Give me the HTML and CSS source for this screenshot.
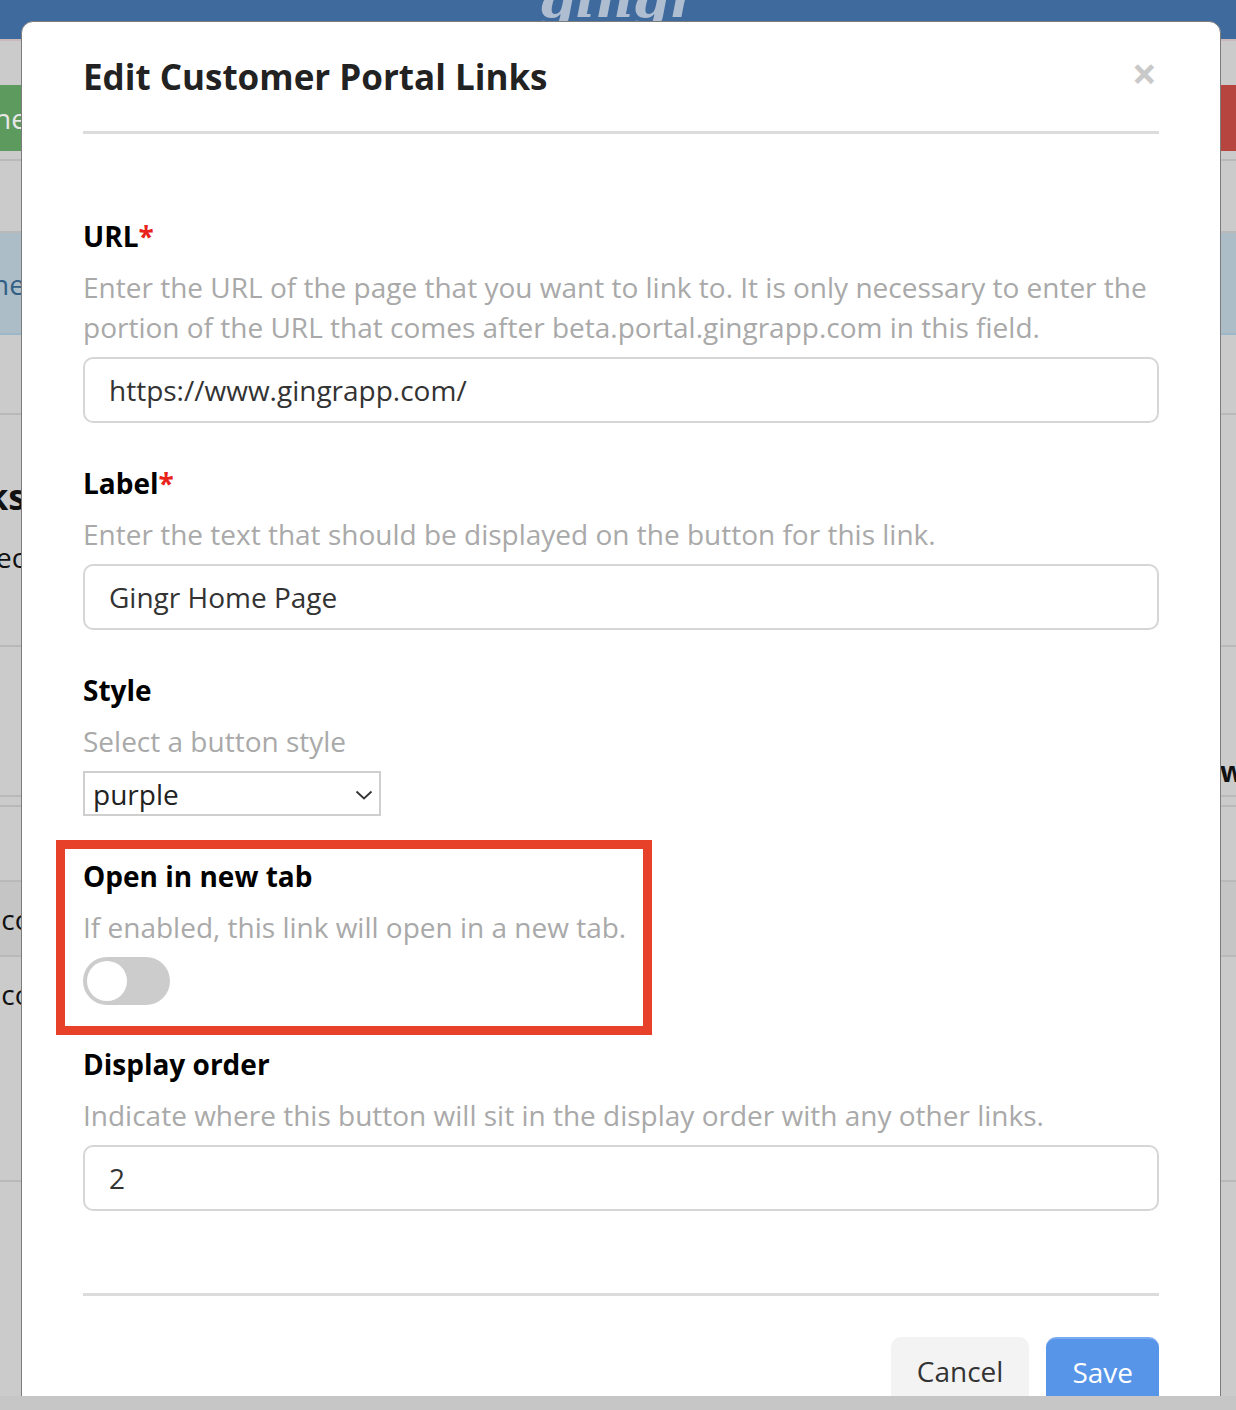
FILE: index.html
```html
<!DOCTYPE html>
<html lang="en">
<head>
    <meta charset="UTF-8">
    <meta name="viewport" content="width=device-width, initial-scale=1.0">
    <title>Edit Customer Portal Links</title>
    <link rel="stylesheet" href="styles.css">
</head>
<body>
    <div class="stage">
        <!-- page behind the dialog (dimmed) -->
        <div class="page">
            <div class="topbar"><span class="logo">gingr</span></div>
            <div class="toolbar">
                <span class="btn-bg green">ne</span>
                <span class="btn-bg red">gi</span>
            </div>
            <div class="row thin"></div>
            <div class="row info"><span>ne</span></div>
            <div class="row tall"></div>
            <div class="row heading"><b>ks</b><span>ec</span></div>
            <div class="row gap"><span></span><b class="right">w</b></div>
            <div class="row sliver"></div>
            <div class="row empty"></div>
            <div class="row line dark"><span>.co</span></div>
            <div class="row line last"><span>.co</span></div>
        </div>

        <!-- dialog -->
        <div class="modal">
            <div class="modal-head">
                <h1>Edit Customer Portal Links</h1>
                <span class="close">&times;</span>
            </div>
            <form class="modal-body">
                <div class="group">
                    <label>URL<span class="req">*</span></label>
                    <p class="help">Enter the URL of the page that you want to link to. It is only necessary to enter the portion of the URL that comes after beta.portal.gingrapp.com in this field.</p>
                    <input class="field" type="text" value="https://www.gingrapp.com/">
                </div>
                <div class="group">
                    <label>Label<span class="req">*</span></label>
                    <p class="help">Enter the text that should be displayed on the button for this link.</p>
                    <input class="field" type="text" value="Gingr Home Page">
                </div>
                <div class="group">
                    <label>Style</label>
                    <p class="help">Select a button style</p>
                    <div class="select">
                        <span>purple</span>
                        <svg width="18" height="12" viewBox="0 0 18 12"><path d="M1.5 2.5 L9 9.5 L16.5 2.5" fill="none" stroke="#333" stroke-width="1.8"/></svg>
                    </div>
                </div>
                <div class="group marked">
                    <label>Open in new tab</label>
                    <p class="help">If enabled, this link will open in a new tab.</p>
                    <span class="toggle"><span class="knob"></span></span>
                </div>
                <div class="group">
                    <label>Display order</label>
                    <p class="help">Indicate where this button will sit in the display order with any other links.</p>
                    <input class="field" type="text" value="2">
                </div>
            </form>
            <div class="modal-foot">
                <button class="btn cancel" type="button">Cancel</button>
                <button class="btn save" type="button">Save</button>
            </div>
        </div>
    </div>
    <div class="bottom-strip"></div>
</body>
</html>
```

FILE: styles.css
```css
*{
    margin: 0;
    padding: 0;
    box-sizing: border-box;
}
body{
    font-family: "Open Sans", "Noto Sans", sans-serif;
    background-color: #c6c6c6;
    width: 1236px;
    overflow: hidden;
}
.stage{
    position: relative;
    height: 1396px;
    overflow: hidden;
}

/* dimmed page behind */
.page{
    background-color: #cbcbcb;
    height: 1396px;
    color: #111;
}
.topbar{
    height: 41px;
    background-color: #3e6a9e;
    border-bottom: 2px solid #c9b9bb;
    text-align: center;
    overflow: hidden;
}
.logo{
    display: inline-block;
    font-family: "DejaVu Serif", serif;
    font-style: italic;
    font-weight: bold;
    font-size: 52px;
    line-height: 1;
    color: #aebdd0;
    margin-top: -30px;
}
.toolbar{
    display: flex;
    justify-content: space-between;
    padding-top: 44px;
    height: 120px;
    border-bottom: 2px solid #b9b9b9;
}
.btn-bg{
    display: block;
    width: 60px;
    height: 66px;
    color: #e8e8e8;
    font-size: 28px;
    line-height: 66px;
}
.green{
    background-color: #5d9a5d;
    margin-left: -6px;
}
.red{
    background-color: #b5453e;
    padding-left: 8px;
}
.row{
    border-bottom: 2px solid #b9b9b9;
}
.thin{
    height: 72px;
}
.info{
    height: 102px;
    background-color: #adbdc7;
    border-bottom-color: #9cb7c8;
    color: #345f85;
    font-size: 28px;
    line-height: 102px;
}
.info span{
    margin-left: -8px;
}
.tall{
    height: 80px;
}
.heading{
    height: 230px;
    padding-top: 62px;
    border-bottom: none;
}
.heading b{
    display: block;
    font-size: 36px;
    line-height: 40px;
    margin-left: -14px;
}
.heading span{
    display: block;
    font-size: 28px;
    line-height: 40px;
    margin-left: -4px;
    margin-top: 20px;
}
.gap{
    height: 152px;
    border-top: 2px solid #b9b9b9;
    display: flex;
    justify-content: space-between;
    align-items: flex-end;
}
.right{
    font-size: 28px;
    line-height: 36px;
    margin-right: -8px;
    margin-bottom: 6px;
}
.sliver{
    height: 10px;
}
.empty{
    height: 75px;
}
.line{
    height: 75px;
    font-size: 28px;
    line-height: 75px;
}
.line span{
    margin-left: -6px;
}
.dark{
    background-color: #c5c5c5;
}
.last{
    height: 225px;
}

/* dialog */
.modal{
    position: absolute;
    top: 21px;
    left: 21px;
    width: 1200px;
    background-color: #fff;
    border: 1px solid #7c7c7c;
    border-radius: 12px;
    padding: 0 61px;
}
.modal-head{
    display: flex;
    justify-content: space-between;
    align-items: flex-start;
    padding: 31px 0 30px;
    border-bottom: 3px solid #dcdcdc;
}
.modal-head h1{
    font-size: 35px;
    line-height: 48px;
    font-weight: 700;
    color: #222;
}
.close{
    font-size: 44px;
    line-height: 40px;
    font-weight: 700;
    color: #c9c9c9;
    margin-top: 0;
    margin-right: 2px;
}
.modal-body{
    padding: 82px 0 42px;
}
.group{
    margin-bottom: 40px;
}
.group label{
    display: block;
    font-size: 28px;
    line-height: 40px;
    font-weight: 700;
    color: #000;
    margin-bottom: 11px;
}
.req{
    color: #e8231b;
}
.help{
    font-size: 28px;
    line-height: 40px;
    color: #a9a9a9;
    margin-bottom: 10px;
}
.field{
    display: block;
    width: 100%;
    height: 66px;
    border: 2px solid #d6d6d6;
    border-radius: 10px;
    padding: 0 24px;
    font-family: "Open Sans", "Noto Sans", sans-serif;
    font-size: 28px;
    color: #333;
    background-color: #fff;
    outline: none;
}
.select{
    width: 298px;
    height: 45px;
    border: 2px solid #cfcfcf;
    display: flex;
    align-items: center;
    justify-content: space-between;
    padding: 0 6px 0 8px;
    font-size: 28px;
    color: #222;
}
.select svg{
    margin-top: 2px;
}

/* red annotation frame */
.marked{
    width: 596px;
    margin: -16px 0 9px -27px;
    padding: 7px 0 21px 18px;
    border: 9px solid #e8412a;
}
.toggle{
    display: block;
    width: 87px;
    height: 48px;
    border-radius: 24px;
    background-color: #cccccc;
    padding: 4px;
}
.knob{
    display: block;
    width: 40px;
    height: 40px;
    border-radius: 50%;
    background-color: #fff;
}

.modal-foot{
    border-top: 3px solid #dcdcdc;
    padding: 41px 0 30px;
    display: flex;
    justify-content: flex-end;
    gap: 17px;
}
.btn{
    font-family: "Open Sans", "Noto Sans", sans-serif;
    font-size: 28px;
    line-height: 40px;
    padding: 13px 26px 17px;
    border-radius: 10px;
    border: none;
}
.cancel{
    background-color: #f3f3f3;
    color: #333;
}
.save{
    background-color: #5795e8;
    color: #fff;
    border-top: 2px solid #7aaaf0;
}
.bottom-strip{
    height: 14px;
    background-color: #c6c6c6;
}
```
